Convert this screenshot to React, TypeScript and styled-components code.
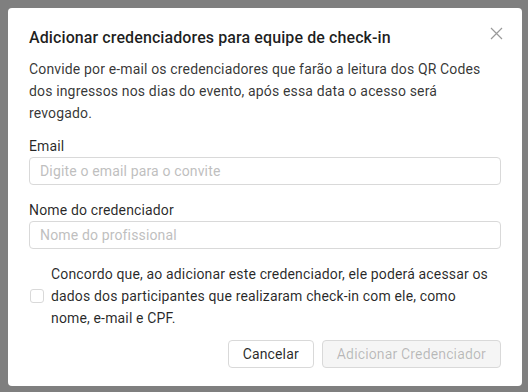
import React from 'react';
import styled, { createGlobalStyle } from 'styled-components';

const GlobalStyle = createGlobalStyle`
  html, body {
    margin: 0;
    padding: 0;
  }
  body {
    font-family: Roboto, "Liberation Sans", sans-serif;
    letter-spacing: 0.15px;
    color: rgba(0, 0, 0, 0.85);
  }
`;

const Overlay = styled.div`
  min-height: 100vh;
  box-sizing: border-box;
  padding: 8px 6px 6px 8px;
  background: #7f7f7f;
`;

const Modal = styled.div`
  position: relative;
  width: 514px;
  box-sizing: border-box;
  padding: 18px 21px 18px 21px;
  background: #fff;
  border-radius: 4px;
`;

const CloseButton = styled.button`
  position: absolute;
  top: 12px;
  right: 13px;
  width: 26px;
  height: 26px;
  padding: 0;
  border: none;
  background: transparent;
  display: flex;
  align-items: center;
  justify-content: center;
  color: #9a9a9a;
  cursor: pointer;
`;

const Title = styled.h2`
  margin: 0;
  font-size: 16px;
  line-height: 24px;
  font-weight: 500;
  letter-spacing: 0.1px;
  color: rgba(0, 0, 0, 0.88);
`;

const Description = styled.p`
  max-width: 458px;
  margin: 8px 0 11px;
  font-size: 14px;
  line-height: 22px;
  color: rgba(0, 0, 0, 0.8);
`;

const Field = styled.div`
  display: flex;
  flex-direction: column;
  margin-bottom: 14px;
`;

const Label = styled.label`
  font-size: 14px;
  line-height: 22px;
  color: rgba(0, 0, 0, 0.85);
`;

const Input = styled.input`
  height: 28px;
  box-sizing: border-box;
  padding: 0 10px;
  border: 1px solid #d9d9d9;
  border-radius: 4px;
  font-family: inherit;
  letter-spacing: inherit;
  font-size: 14px;
  color: rgba(0, 0, 0, 0.85);
  outline: none;
  &::placeholder {
    color: #bfbfbf;
  }
`;

const ConsentRow = styled.label`
  display: flex;
  align-items: center;
  gap: 7px;
  padding-left: 1px;
  margin-bottom: 11px;
`;

const CheckBox = styled.span`
  flex: none;
  width: 14px;
  height: 14px;
  box-sizing: border-box;
  border: 1px solid #d9d9d9;
  border-radius: 3px;
  background: #fff;
`;

const ConsentText = styled.span`
  width: 444px;
  font-size: 14px;
  line-height: 22px;
  color: rgba(0, 0, 0, 0.85);
`;

const Footer = styled.div`
  display: flex;
  justify-content: flex-end;
  gap: 8px;
`;

const Button = styled.button<{ $disabled?: boolean }>`
  height: 28px;
  padding: 0 14px;
  box-sizing: border-box;
  border: 1px solid #d9d9d9;
  border-radius: 4px;
  font-family: inherit;
  letter-spacing: inherit;
  font-size: 14px;
  background: ${p => (p.$disabled ? '#f5f5f5' : '#fff')};
  color: ${p => (p.$disabled ? 'rgba(0, 0, 0, 0.25)' : 'rgba(0, 0, 0, 0.85)')};
  cursor: ${p => (p.$disabled ? 'not-allowed' : 'pointer')};
`;

export default function App() {
  return (
    <>
      <GlobalStyle />
      <Overlay>
        <Modal>
          <CloseButton aria-label="Fechar">
            <svg width="13" height="13" viewBox="0 0 13 13">
              <path d="M1 1L12 12M12 1L1 12" stroke="currentColor" strokeWidth="1.2" />
            </svg>
          </CloseButton>
          <Title>Adicionar credenciadores para equipe de check-in</Title>
          <Description>
            Convide por e-mail os credenciadores que farão a leitura dos QR Codes dos ingressos nos
            dias do evento, após essa data o acesso será revogado.
          </Description>
          <Field>
            <Label>Email</Label>
            <Input placeholder="Digite o email para o convite" />
          </Field>
          <Field>
            <Label>Nome do credenciador</Label>
            <Input placeholder="Nome do profissional" />
          </Field>
          <ConsentRow>
            <CheckBox />
            <ConsentText>
              Concordo que, ao adicionar este credenciador, ele poderá acessar os dados dos
              participantes que realizaram check-in com ele, como nome, e-mail e CPF.
            </ConsentText>
          </ConsentRow>
          <Footer>
            <Button>Cancelar</Button>
            <Button $disabled>Adicionar Credenciador</Button>
          </Footer>
        </Modal>
      </Overlay>
    </>
  );
}
